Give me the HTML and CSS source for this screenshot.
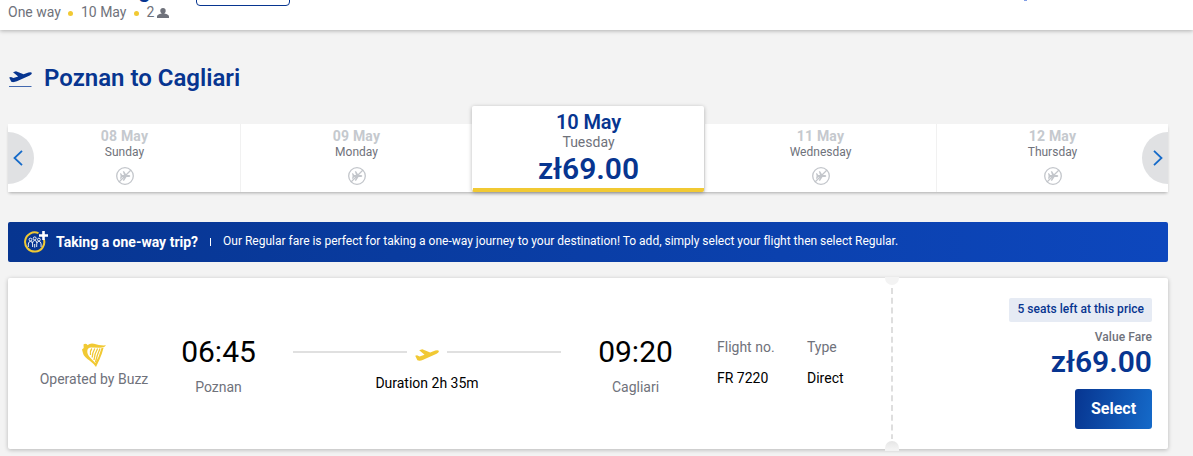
FILE: index.html
```html
<!DOCTYPE html>
<html lang="en">
<head>
<meta charset="utf-8">
<title>Poznan to Cagliari</title>
<link rel="stylesheet" href="styles.css">
</head>
<body>
<svg class="defs" width="0" height="0">
  <symbol id="plane" viewBox="0 0 24 12">
    <path d="M.2 6.800 2 6.200 4.600 7.400 9.600 5.700 4.200 1.300 7.300.2 15.200 3.500 20.300 1.600Q23.200.8 23.900 2.100 24 3.600 21.600 4.800L8.200 10.800Q4.800 12.200 2.400 11.300Z"/>
  </symbol>
  <symbol id="no-flight" viewBox="0 0 18 18">
    <circle cx="9" cy="9" r="8.300" fill="none" stroke="currentColor" stroke-width="1.300"/>
    <path d="M3 15 15 3" stroke="currentColor" stroke-width="1.300"/>
    <path d="M4 6.300h1L6.300 8H8L6.800 4.200h1.300l2.400 3.800h2.300q1.500.2 1.500 1t-1.500 1h-2.300l-2.400 3.800H6.800L8 10H6.300L5 11.700H4L4.600 9Z" fill="currentColor"/>
  </symbol>
</svg>
<header class="header">
  <div class="header-details">
    <div class="header-route">Poznan to Cagliari</div>
    <div class="header-info">
      <span>One way</span><i class="dot"></i><span>10 May</span><i class="dot"></i><span>2</span>
      <svg class="person" viewBox="0 0 12 10"><circle cx="6" cy="2.700" r="2.700"/><path d="M4.600 4h2.800v1.600q4.600.8 4.600 3V10H0V8.600q0-2.200 4.600-3Z"/></svg>
    </div>
  </div>
  <div class="header-button"></div>
  <div class="header-mark"></div>
</header>
<main class="main">
  <h1 class="title">
    <svg class="title-icon" viewBox="0 0 23 17"><use href="#plane" x="0" y="0" width="23" height="11.500"/><path d="M0 15.500h22.500" stroke="#4268af" stroke-width="1"/></svg>
    Poznan to Cagliari
  </h1>
  <section class="carousel">
    <div class="day"><b>08 May</b><span>Sunday</span><svg class="no-flight"><use href="#no-flight"/></svg></div>
    <div class="day"><b>09 May</b><span>Monday</span><svg class="no-flight"><use href="#no-flight"/></svg></div>
    <div class="day selected"><b>10 May</b><span>Tuesday</span><strong>zł69.00</strong></div>
    <div class="day"><b>11 May</b><span>Wednesday</span><svg class="no-flight"><use href="#no-flight"/></svg></div>
    <div class="day"><b>12 May</b><span>Thursday</span><svg class="no-flight"><use href="#no-flight"/></svg></div>
    <div class="arrow prev"><svg viewBox="0 0 10 16"><path d="M9 .8 1.500 8 9 15.200"/></svg></div>
    <div class="arrow next"><svg viewBox="0 0 10 16"><path d="M1 .8 8.500 8 1 15.200"/></svg></div>
  </section>
  <section class="banner">
    <svg class="banner-icon" viewBox="0 0 24 22">
      <path d="M14.500 2.200A9.600 9.600 0 1 0 19.800 8" fill="none" stroke="#f1c933" stroke-width="2"/>
      <g fill="none" stroke="#fff" stroke-width=".9"><circle cx="6.500" cy="8.600" r="1.400"/><circle cx="10.700" cy="7.400" r="1.500"/><circle cx="14.900" cy="8.600" r="1.400"/><path d="M4.300 16v-3q.4-2.500 2.200-2.700 2 .2 2.100 2.700v3M8.500 12q.4-2.500 2.200-2.700 1.900.2 2.200 2.700M10.700 13v3.500M12.700 16v-3q.2-2.500 2.200-2.700 1.900.2 2.200 2.700v3"/></g>
      <path d="M19.500 0v9M15 4.500h9" stroke="#fff" stroke-width="2.600"/>
    </svg>
    <b>Taking a one-way trip?</b><i class="separator"></i>
    <span>Our Regular fare is perfect for taking a one-way journey to your destination! To add, simply select your flight then select Regular.</span>
  </section>
  <article class="flight">
    <div class="carrier">
      <svg class="harp" viewBox="0 0 24 24">
        <path d="M1.500 1.500Q3 0 5 1.200L5.500 2.200Q8 0 12 .8 18 2.800 24 2.300 22.500 4.800 18 4.800 13 4.500 9 4.500 5.500 4.800 5.300 8 5 11.500 8.500 15L13.300 20 16.500 14 19.500 5 21.500 5Q20 11 17.500 16.500L14 24Q11.500 20.500 7.500 17.500 1.500 13.500.8 9.500L0 6.500 1.700 5Z"/>
        <path d="M9.800 5.500Q7.800 8 8.500 12M12.800 5.500Q10.200 10 10.200 14.500M15.600 5.500Q12.400 11 12 17M18 5.500Q15 12 13.500 19" fill="none" stroke="#f1c933" stroke-width="1.300"/>
      </svg>
      <span>Operated by Buzz</span>
    </div>
    <div class="stop departure"><time>06:45</time><span>Poznan</span></div>
    <div class="duration">
      <div class="path"><i></i><svg><use href="#plane"/></svg><i></i></div>
      <span>Duration 2h 35m</span>
    </div>
    <div class="stop arrival"><time>09:20</time><span>Cagliari</span></div>
    <div class="info number"><span>Flight no.</span><b>FR 7220</b></div>
    <div class="info type"><span>Type</span><b>Direct</b></div>
    <div class="tear"><i class="notch"></i><svg class="dashes" viewBox="0 0 2 154"><path d="M1 0V154"/></svg><i class="notch bottom"></i></div>
    <div class="fare">
      <span class="seats">5 seats left at this price</span>
      <span class="fare-name">Value Fare</span>
      <strong class="fare-price">zł69.00</strong>
      <button class="select">Select</button>
    </div>
  </article>
</main>
</body>
</html>
```

FILE: styles.css
```css
* { box-sizing: border-box; }
body { margin: 0; height: 456px; overflow: hidden; background: #f3f3f3; font-family: Roboto, "Noto Sans", sans-serif; color: #6f727b; }
svg { display: block; flex: none; }
.defs { position: absolute; }
.header { position: relative; height: 30px; display: flex; align-items: flex-end; background: #fff; box-shadow: 0 1px 4px rgba(0,0,0,.28); padding: 0 8px 7px; }
.header-details { width: 188px; }
.header-route { height: 24px; line-height: 23px; font-size: 22px; font-weight: 500; color: #073590; white-space: nowrap; }
.header-info { display: flex; align-items: center; height: 21px; line-height: 21px; font-size: 14px; }
.dot { width: 5px; height: 5px; border-radius: 50%; background: #f1c933; margin: 1px 7.500px 0; }
.person { width: 12px; height: 10px; margin-left: 3px; margin-top: 1px; fill: #6f727b; }
.header-button { width: 94px; height: 38px; margin-bottom: 17px; border: 1px solid #073590; border-radius: 4px; }
.header-mark { width: 3px; height: 1px; margin: 0 0 22px 734px; background: #829ee5; }
.main { width: 1160px; margin-left: 8px; padding-top: 34px; }
.title { display: flex; align-items: center; gap: 13px; height: 28px; margin: 0 0 32px; font-size: 24px; font-weight: 600; line-height: 28px; color: #073590; }
.title-icon { width: 23px; height: 17px; margin-top: 2px; margin-left: 1px; margin-right: -1px; fill: #073590; }
.carousel { position: relative; display: grid; grid-template-columns: repeat(5, 232px); height: 68px; background: #fff; box-shadow: 0 2px 3px -1px rgba(0,0,0,.3); }
.day { display: flex; flex-direction: column; align-items: center; padding-top: 4px; border-left: 1px solid #f1f1f1; }
.day:first-child { border-color: #fff; }
.day b { font-size: 14px; line-height: 16px; font-weight: 700; color: #c5c9ce; letter-spacing: .2px; }
.day span { font-size: 12px; line-height: 16px; }
.no-flight { width: 18px; height: 18px; margin-top: 7px; color: #c3c6cb; }
.day.selected { height: 86px; margin-top: -18px; padding-top: 4px; background: #fff; border-left: 1px solid #fff; border-bottom: 4px solid #f1c933; border-radius: 2px; box-shadow: 0 1px 4px rgba(0,0,0,.28); z-index: 1; }
.selected b { font-size: 20px; line-height: 24px; font-weight: 600; color: #073590; letter-spacing: -.1px; }
.selected span { font-size: 14px; line-height: 16px; }
.selected strong { font-size: 30px; line-height: 38px; font-weight: 600; color: #073590; }
.arrow { position: absolute; top: 8px; width: 26px; height: 52px; display: flex; align-items: center; background: #e0e1e3; }
.arrow svg { width: 10px; height: 16px; fill: none; stroke: #156ac9; stroke-width: 1.8; }
.prev { left: 0; border-radius: 0 26px 26px 0; padding-left: 5px; }
.next { right: 0; border-radius: 26px 0 0 26px; padding-left: 11px; }
.banner { display: flex; align-items: center; height: 40px; margin-top: 30px; padding-left: 16px; border-radius: 2px; background: linear-gradient(90deg, #073590, #0d47bd); color: #fff; font-size: 12px; white-space: nowrap; }
.banner-icon { width: 24px; height: 22px; margin-right: 8px; }
.banner b { font-size: 14px; font-weight: 700; margin-top: -1px; }
.banner span { margin-top: -2px; letter-spacing: -.007px; }
.separator { width: 1px; height: 8px; margin: 0 12px; background: #fff; }
.flight { display: flex; height: 171px; margin-top: 16px; background: #fff; border-radius: 2px; box-shadow: 0 1px 4px rgba(0,0,0,.25); font-size: 14px; line-height: 20px; white-space: nowrap; }
.carrier { width: 108px; margin-left: 32px; padding-top: 64px; display: flex; flex-direction: column; align-items: center; }
.harp { width: 24px; height: 24px; fill: #f1c933; margin: 1px 0 2px; }
.stop { width: 75px; padding-top: 54px; display: flex; flex-direction: column; align-items: center; }
.stop time { font-size: 30px; line-height: 40px; color: #000; margin-bottom: 5px; }
.departure { margin-left: 33px; }
.duration { width: 268px; margin-left: 37px; padding-top: 67px; display: flex; flex-direction: column; align-items: center; color: #000; }
.path { width: 268px; height: 14px; margin-bottom: 14px; display: flex; align-items: center; gap: 8px; }
.path i { flex: 1; height: 2px; background: #e0e0e0; }
.path svg { width: 24px; height: 12px; margin-top: 5px; fill: #f1c933; }
.arrival { margin-left: 37px; }
.info { padding-top: 59px; display: flex; flex-direction: column; gap: 11px; }
.info b { color: #000; font-weight: 400; }
.number { margin-left: 44px; width: 90px; }
.type { width: 71px; }
.tear { width: 14px; height: 174px; margin-top: -1px; margin-left: 7px; display: flex; flex-direction: column; align-items: center; }
.notch { flex: none; width: 14px; height: 8px; background: #f3f3f3; border-radius: 0 0 7px 7px; }
.notch.bottom { height: 10px; margin-top: 2px; border-radius: 7px 7px 0 0; background: linear-gradient(#e5e5e5, #f3f3f3 80%); }
.dashes { width: 2px; height: 154px; stroke: #dedede; stroke-width: 2; stroke-dasharray: 6 3.75; stroke-dashoffset: -3; }
.fare { flex: 1; padding: 20px 16px 0 0; display: flex; flex-direction: column; align-items: flex-end; }
.seats { height: 24px; padding: 0 8px; border-radius: 2px; background: #e6ebf4; color: #073590; font-size: 12px; font-weight: 500; line-height: 22px; letter-spacing: .03px; }
.fare-name { margin-top: 7px; font-size: 12px; font-weight: 500; line-height: 16px; letter-spacing: .08px; }
.fare-price { font-size: 30px; font-weight: 600; line-height: 36px; color: #073590; margin-top: -1px; }
.select { width: 77px; height: 40px; margin-top: 9px; padding: 0 0 2px; border: 0; border-radius: 3px; background: linear-gradient(100deg, #073590, #156ac9); color: #fff; font: 700 16px Roboto, sans-serif; }
```
